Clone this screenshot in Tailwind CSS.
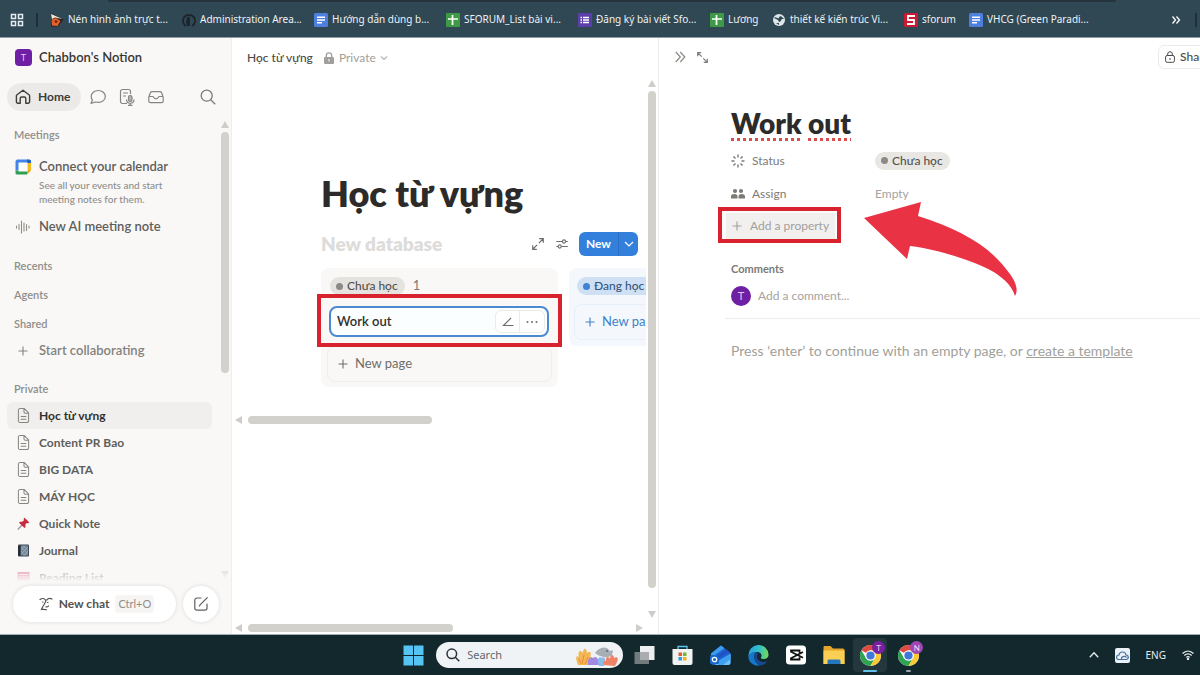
<!DOCTYPE html>
<html lang="vi">
<head>
    <meta charset="UTF-8">
    <meta name="viewport" content="width=device-width, initial-scale=1.0">
    <title>Học từ vựng</title>
    <script src="https://cdn.jsdelivr.net/npm/@tailwindcss/browser@4"></script>
</head>
<body class="font-['Lato','Noto_Sans',sans-serif] text-[13px] text-[#32302c]">
    <!-- Shared icons -->
    <svg class="hidden">
        <symbol id="page" viewBox="0 0 14 18">
            <path d="M3.2 1.5h4.6l4.7 4.7v8.1a2.2 2.2 0 0 1-2.2 2.2H3.2a1.700 1.700 0 0 1-1.700-1.700V3.200a1.700 1.700 0 0 1 1.700-1.700zM7.500 1.700v3.300a1.500 1.500 0 0 0 1.500 1.500h3.300M4 10h6M4 13h6" fill="none" stroke="currentColor" stroke-width="1.100"/>
        </symbol>
        <symbol id="plus" viewBox="0 0 10 10">
            <path d="M5 .5v9M.5 5h9" fill="none" stroke="currentColor" stroke-width="1.100"/>
        </symbol>
        <symbol id="docs" viewBox="0 0 14 14">
            <rect width="14" height="14" rx="1.500" fill="#4d80dd"/>
            <path d="M3 4.300h8M3 7h8M3 9.700h5" stroke="#fff" stroke-width="1.400"/>
        </symbol>
        <symbol id="sheets" viewBox="0 0 14 14">
            <rect width="14" height="14" rx="1" fill="#3f9a45"/>
            <path d="M6.500 2v10M2 6h10" stroke="#fff" stroke-width="1.700"/>
        </symbol>
        <symbol id="chrome" viewBox="0 0 24 24">
            <circle cx="12" cy="12" r="11" fill="#fff"/>
            <path d="M12 12 2.500 6.500A11 11 0 0 1 21.500 6.500H12z" fill="#dd4b3e"/>
            <path d="M2.500 6.500A11 11 0 0 0 12 23l4.800-8.300L12 12 7.200 14.700z" fill="#2fa352"/>
            <path d="M21.500 6.500H12l4.800 8.200L12 23A11 11 0 0 0 21.500 6.500z" fill="#fbc934"/>
            <circle cx="12" cy="12" r="5.500" fill="#fff"/>
            <circle cx="12" cy="12" r="4.300" fill="#3f78d8"/>
        </symbol>
    </svg>

    <div class="flex h-screen flex-col overflow-hidden bg-white">
        <!-- Bookmarks bar -->
        <nav class="relative flex h-[38px] shrink-0 items-center overflow-hidden border-b border-[#8b9ca5] bg-[#304754] pt-[2px] pl-2.5 font-['Noto_Sans',sans-serif] text-[10px] text-[#eef3f5]">
            <div class="absolute top-0 left-[108px] h-[2px] w-[84%] max-w-[1010px] rounded-b-lg bg-[#25333c]"></div>
            <button aria-label="Apps" class="mr-3">
                <svg class="size-3.5" viewBox="0 0 14 14" fill="none" stroke="#e4ecef" stroke-width="1.500"><path d="M1.500 1.500h4v4h-4zM8.500 1.500h4v4h-4zM1.500 8.500h4v4h-4zM8.500 8.500h4v4h-4z"/></svg>
            </button>
            <div class="mr-3 h-3.5 w-[2px] bg-[#1c2f3b]"></div>
            <a href="#" class="flex w-[132px] shrink-0 items-center gap-1 whitespace-nowrap">
                <svg class="size-3.5 shrink-0" viewBox="0 0 14 14"><path d="M1 .5 13.500 6.500 8 13.500 1 13.500 2.500 8z" fill="#2b211f"/><path d="M1 1 12.500 6 5 4.500 2 6z" fill="#f4ead9"/><path d="M2 6.500 6 5l4.500 3-3 5-5.500-.5z" fill="#e5632b"/><circle cx="6" cy="8.500" r="1.500" fill="#7e2616"/></svg>
                Nén hình ảnh trực t...
            </a>
            <a href="#" class="flex w-[132px] shrink-0 items-center gap-1 whitespace-nowrap">
                <svg class="size-3.5 shrink-0" viewBox="0 0 14 14"><path d="M4 13A6 6 0 1 1 10 13M7 4c-3 2-2 6-1 9M7 4v9" fill="none" stroke="#1c242b" stroke-width="1.800"/></svg>
                Administration Area...
            </a>
            <a href="#" class="flex w-[132px] shrink-0 items-center gap-1 whitespace-nowrap"><svg class="size-3.5 shrink-0"><use href="#docs"/></svg>Hướng dẫn dùng b...</a>
            <a href="#" class="flex w-[132px] shrink-0 items-center gap-1 whitespace-nowrap"><svg class="size-3.5 shrink-0"><use href="#sheets"/></svg>SFORUM_List bài vi...</a>
            <a href="#" class="flex w-[132px] shrink-0 items-center gap-1 whitespace-nowrap">
                <svg class="size-3.5 shrink-0" viewBox="0 0 14 14"><rect width="14" height="14" rx="1" fill="#5b3fa8"/><path d="M5 4.500h6M5 7h6M5 9.500h6M2.500 4.500H4M2.500 7H4M2.500 9.500H4" stroke="#fff" stroke-width="1.300"/></svg>
                Đăng ký bài viết Sfo...
            </a>
            <a href="#" class="flex w-[62px] shrink-0 items-center gap-1 whitespace-nowrap"><svg class="size-3.5 shrink-0"><use href="#sheets"/></svg>Lương</a>
            <a href="#" class="flex w-[132px] shrink-0 items-center gap-1 whitespace-nowrap">
                <svg class="size-3.5 shrink-0" viewBox="0 0 14 14"><circle cx="7" cy="7" r="6" fill="#dfe6ea"/><path d="M2 5c2-2 3 1 5 0 0-2 2-2 3-1l2 2c-2 0-3 0-3 2l-2 1-1-2zM4 10l3 0v2z" fill="#304754"/></svg>
                thiết kế kiến trúc Vi...
            </a>
            <a href="#" class="flex w-[65px] shrink-0 items-center gap-1 whitespace-nowrap">
                <svg class="size-3.5 shrink-0" viewBox="0 0 14 14"><rect width="14" height="14" rx="1.500" fill="#c91a33"/><path d="M11 3H4v4h6v4H3" fill="none" stroke="#fff" stroke-width="1.800"/></svg>
                sforum
            </a>
            <a href="#" class="flex w-[132px] shrink-0 items-center gap-1 whitespace-nowrap"><svg class="size-3.5 shrink-0"><use href="#docs"/></svg>VHCG (Green Paradi...</a>
            <button aria-label="More bookmarks" class="mr-3.5 ml-auto">
                <svg class="size-2.5" viewBox="0 0 10 10" fill="none" stroke="#fff" stroke-width="1.300"><path d="m1.500 1.500 3 3.500-3 3.500M5.500 1.500l3 3.500-3 3.500"/></svg>
            </button>
            <div class="mr-[3px] h-3.5 w-[2px] bg-[#1c2f3b]"></div>
        </nav>

        <main class="grid min-h-0 flex-1 grid-cols-[232px_426fr_542fr]">
            <!-- Sidebar -->
            <aside class="relative flex min-h-0 flex-col border-r border-[#efeeec] bg-[#f9f8f7] text-[#5f5e5b]">
                <div class="flex h-[39px] shrink-0 items-center gap-[7px] pl-[15px]">
                    <span class="flex size-[17px] items-center justify-center rounded bg-[#6e1fa3] text-[9px] text-[#e3c9f2]">T</span>
                    <span class="font-semibold text-[#383733]">Chabbon's Notion</span>
                </div>
                <div class="flex h-[39px] shrink-0 items-center pl-[7px]">
                    <button class="mr-[9px] flex h-7 w-[74px] items-center gap-[7px] rounded-full bg-[#ebeae8] pl-2 text-[12px] font-bold text-[#3d3c38]">
                        <svg class="size-4" viewBox="0 0 16 16" fill="none" stroke="currentColor" stroke-width="1.400" stroke-linejoin="round"><path d="M8 1.300 2 5.800a1.400 1.400 0 0 0-.6 1.200v5.700A1.500 1.500 0 0 0 2.900 14.200h2.300V9.500a1.500 1.500 0 0 1 1.500-1.500h2.600a1.500 1.500 0 0 1 1.500 1.500v4.700h2.300a1.500 1.500 0 0 0 1.500-1.500V7a1.400 1.400 0 0 0-.6-1.200z"/></svg>
                        Home
                    </button>
                    <button aria-label="Chat" class="mr-[13px]">
                        <svg class="size-4" viewBox="0 0 16 16" fill="none" stroke="#868582" stroke-width="1.200" stroke-linejoin="round"><path d="M8.300 1.500c4 0 7 2.600 7 5.900s-3 6-7 6c-1 0-1.900-.2-2.700-.4L1 14.300l1.500-3.200C1.700 10 1.200 8.800 1.200 7.400c0-3.300 3-5.900 7.100-5.900z"/></svg>
                    </button>
                    <button aria-label="Meeting notes" class="mr-[13px]">
                        <svg class="h-[18px] w-4" viewBox="0 0 16 18" fill="none" stroke="#868582" stroke-width="1.200"><path d="M8 15.500H3.500a2 2 0 0 1-2-2v-10a2 2 0 0 1 2-2h6a2 2 0 0 1 2 2V6M4 5h5M4 8h3"/><rect x="9.500" y="7.500" width="3.500" height="6" rx="1.700" fill="#b5b4b1"/><path d="M7.500 11.500c0 5 7.500 5 7.500 0M11.200 15.500v2M9 17.300h4.500"/></svg>
                    </button>
                    <button aria-label="Inbox">
                        <svg class="size-4" viewBox="0 0 16 16" fill="none" stroke="#868582" stroke-width="1.200"><path d="M.8 8 2.500 3.500a1.500 1.500 0 0 1 1.400-.9h8.200a1.500 1.500 0 0 1 1.400.9L15.200 8v4a1.700 1.700 0 0 1-1.700 1.700h-11A1.700 1.700 0 0 1 .8 12zM1 7.500h4c.5 0 .5 2.300 3 2.300s2.500-2.300 3-2.300h4"/></svg>
                    </button>
                    <button aria-label="Search" class="mr-[15px] ml-auto">
                        <svg class="size-4" viewBox="0 0 16 16" fill="none" stroke="#7b7a77" stroke-width="1.300"><circle cx="6.700" cy="6.700" r="5.500"/><path d="m10.700 10.700 4.500 4.500"/></svg>
                    </button>
                </div>

                <div class="min-h-0 flex-1 overflow-hidden pt-1 font-semibold">
                    <h2 class="h-[29px] pl-3.5 text-[11px] leading-[29px] text-[#8f8e8a]">Meetings</h2>
                    <div class="mt-1.5 flex h-6 items-center gap-2 pl-[15px]">
                        <svg class="size-4" viewBox="0 0 16 16"><path d="M2 .5h11v4H5v7H.5V2z" fill="#4284ea"/><path d="M12 .5h2.500A1.500 1.500 0 0 1 16 2v2h-4z" fill="#2260c4"/><path d="M12 4h4v8h-4z" fill="#f6bb24"/><path d="M.5 11.500H12v4H2A1.500 1.500 0 0 1 .5 14z" fill="#2f9e50"/><path d="M12 11.500h4l-4 4z" fill="#e5a11d"/><path d="M3.500 3.500h9v9h-9z" fill="#fff"/></svg>
                        Connect your calendar
                    </div>
                    <p class="-mt-px w-[190px] pl-[39px] text-[10px] leading-[14px] font-medium text-[#8f8e8a]">See all your events and start meeting notes for them.</p>
                    <div class="mt-[9px] flex h-6 items-center gap-2 pl-[15px]">
                        <svg class="size-4" viewBox="0 0 16 16" stroke="#8f8e8a" stroke-width="1.100" stroke-linecap="round"><path d="M1.500 7v2M4 5.500v5M6.500 2v12M9 4v8M11.500 5.500v6M14 7v2"/></svg>
                        New AI meeting note
                    </div>
                    <div class="mt-3 text-[11px] text-[#8f8e8a]">
                        <h2 class="h-[29px] pl-3.5 leading-[29px]">Recents</h2>
                        <h2 class="h-[29px] pl-3.5 leading-[29px]">Agents</h2>
                        <h2 class="h-[29px] pl-3.5 leading-[29px]">Shared</h2>
                    </div>
                    <a href="#" class="flex h-[26px] items-center gap-[11px] pl-[18px] text-[#83827e]"><svg class="size-2.5"><use href="#plus"/></svg>Start collaborating</a>
                    <h2 class="mt-3 h-[26px] pl-3.5 text-[11px] leading-[26px] text-[#8f8e8a]">Private</h2>
                    <div class="mr-[19px] ml-[7px] text-[12px] font-bold">
                        <a href="#" class="flex h-[27px] items-center gap-[9px] rounded-md bg-[#f0efed] pl-2.5 text-[#32302c]"><svg class="h-[17px] w-[13px] text-[#868582]"><use href="#page"/></svg>Học từ vựng</a>
                        <a href="#" class="flex h-[27px] items-center gap-[9px] pl-2.5"><svg class="h-[17px] w-[13px] text-[#868582]"><use href="#page"/></svg>Content PR Bao</a>
                        <a href="#" class="flex h-[27px] items-center gap-[9px] pl-2.5"><svg class="h-[17px] w-[13px] text-[#868582]"><use href="#page"/></svg>BIG DATA</a>
                        <a href="#" class="flex h-[27px] items-center gap-[9px] pl-2.5"><svg class="h-[17px] w-[13px] text-[#868582]"><use href="#page"/></svg>MÁY HỌC</a>
                        <a href="#" class="flex h-[27px] items-center gap-[9px] pl-2.5">
                            <svg class="size-[13px]" viewBox="0 0 13 13"><path d="M5 8 .8 12.500" stroke="#8c98a4" stroke-width="1.200"/><path d="M7.500.8 12.300 5.300 11 6.200 9.700 5.900 8.300 7.800 8.500 10.200 7.500 11 2 5.700 3 4.700l2.200.1L7 3.300 6.600 1.800z" fill="#c92a3c"/></svg>
                            Quick Note
                        </a>
                        <a href="#" class="flex h-[27px] items-center gap-[9px] pl-2.5">
                            <svg class="size-[13px]" viewBox="0 0 13 13"><rect x="1" y=".5" width="11" height="12" rx="1" fill="#3a4754"/><path d="M4 1.500h7v10H4z" fill="#75889a"/><path d="m4 3 7 7M4 7l4 4.500M6 1.500l5 5M11 3l-7 7M8 1.500 4 6M11 7l-4 4.500" stroke="#b3c0cb" stroke-width=".5"/><path d="M1 2h2v9.500H1z" fill="#242d36"/></svg>
                            Journal
                        </a>
                        <a href="#" class="flex h-[27px] items-center gap-[9px] pl-2.5">
                            <svg class="size-[13px]" viewBox="0 0 13 13"><rect x=".5" y="1" width="12" height="11" rx="1" fill="#d9557a"/><path d="M2 3.500h9M2 6h9" stroke="#f5ccd7"/></svg>
                            Reading List
                        </a>
                    </div>
                </div>

                <!-- Sidebar scrollbar -->
                <div class="absolute top-[83px] right-[2px] bottom-[56px] flex w-2 flex-col items-center gap-1">
                    <svg class="h-[7px] w-2" viewBox="0 0 8 7"><path d="M4 0 8 7H0z" fill="#cfcdc9"/></svg>
                    <div class="h-[241px] w-2 rounded-full bg-[#d3d1cc]"></div>
                    <svg class="mt-auto h-[7px] w-2" viewBox="0 0 8 7"><path d="M4 7 8 0H0z" fill="#cfcdc9"/></svg>
                </div>

                <!-- New chat footer -->
                <div class="absolute inset-x-0 bottom-0 flex h-[66px] items-end gap-[7px] bg-linear-to-b from-[#f9f8f7]/40 via-[#f9f8f7] via-20% to-[#f9f8f7] pb-3 pl-[13px]">
                    <button class="flex h-9 w-[163px] items-center justify-center rounded-full bg-white pl-1 text-[12px] font-bold text-[#53524e] shadow-[0_0_4px_rgba(0,0,0,0.12)]">
                        <svg class="mr-1.5 size-[14px]" viewBox="0 0 14 14" fill="none" stroke="currentColor" stroke-width="1.200" stroke-linecap="round"><path d="M1 2.500C3 1 5.500 1.200 6.300 3M8 2.800c1.200-1.800 3.200-1.800 5-.8M7 3c0 3-3 5-4.500 9.500 1.500-.3 3-.3 5 .3M8.500 5.500h.5M3.500 5h.5M9.500 9c-.5.700-1.500 1-2.500.9"/></svg>
                        New chat
                        <kbd class="ml-1.5 rounded bg-[#f6f5f4] px-[3px] py-px font-['Lato',sans-serif] text-[11px] font-normal text-[#8f8e8a]">Ctrl+O</kbd>
                    </button>
                    <button aria-label="New page" class="flex size-9 items-center justify-center rounded-full bg-white shadow-[0_0_4px_rgba(0,0,0,0.12)]">
                        <svg class="size-4" viewBox="0 0 16 16" fill="none" stroke="#5f5e5b" stroke-width="1.200" stroke-linecap="round"><path d="M8 2H4a2.200 2.200 0 0 0-2.200 2.200V12A2.200 2.200 0 0 0 4 14.200h7.800A2.200 2.200 0 0 0 14 12V8M14.300 1.700 7.300 8.700l-1 1.300"/></svg>
                    </button>
                </div>
            </aside>

            <!-- Page -->
            <section class="relative flex min-w-0 flex-col overflow-hidden">
                <div class="flex h-[39px] shrink-0 items-center pl-[15px] text-[12px]">
                    <span class="font-medium text-[#4b4a46]">Học từ vựng</span>
                    <svg class="mr-[5px] ml-[11px] h-3 w-2.5" viewBox="0 0 10 12"><rect y="5" width="10" height="7" rx="1.300" fill="#a19f9b"/><path d="M2.300 5.500V3.500a2.700 2.700 0 0 1 5.400 0v2" fill="none" stroke="#a19f9b" stroke-width="1.300"/><path d="M5 7v2.500" stroke="#fff"/></svg>
                    <button class="flex items-center gap-1 text-[#a19f9b]">Private
                        <svg class="size-2" viewBox="0 0 8 8" fill="none" stroke="#b4b2ae" stroke-width="1.100"><path d="m1 2.500 3 3 3-3"/></svg>
                    </button>
                </div>
                <div class="mr-3 pl-[89px]">
                    <h1 class="mt-[92px] text-[36px] leading-[48px] font-extrabold text-[#2c2b29]">Học từ vựng</h1>
                    <div class="mt-[15px] mr-2 flex h-6 items-center">
                        <h2 class="mr-auto text-[19px] font-extrabold text-[#dddcda]">New database</h2>
                        <button aria-label="Open as full page" class="mr-3"><svg class="size-3" viewBox="0 0 10 10" fill="none" stroke="#6f6e6a"><path d="M6 .6h3.400V4M9.400.6 5.700 4.300M.6 6v3.400H4M.6 9.400l3.700-3.700"/></svg></button>
                        <button aria-label="Settings" class="mr-[11px]"><svg class="size-3" viewBox="0 0 12 12" fill="none" stroke="#6f6e6a" stroke-width="1.100"><path d="M.3 3.500h6M10 3.500h1.800M.3 8.500H2M5.500 8.500h6.300"/><circle cx="8" cy="3.500" r="1.600"/><circle cx="3.700" cy="8.500" r="1.600"/></svg></button>
                        <button class="h-6 w-[39px] rounded-l-md bg-[#3380dc] text-[12px] font-bold text-white">New</button>
                        <button aria-label="New from template" class="flex h-6 w-5 items-center justify-center rounded-r-md border-l border-[#2b70c4] bg-[#3380dc]"><svg class="size-2.5" viewBox="0 0 10 10" fill="none" stroke="#fff" stroke-width="1.200"><path d="m1 3 4 4 4-4"/></svg></button>
                    </div>

                    <!-- Board -->
                    <div class="relative mt-3">
                        <div class="flex items-start gap-[11px] overflow-hidden">
                            <div class="h-[119px] w-[237px] shrink-0 rounded-lg bg-[#f9f8f7] px-1.5 pt-[9px]">
                                <div class="flex h-[18px] items-center pl-[3px]">
                                    <span class="mr-2 flex h-[18px] items-center gap-1 rounded-full bg-[#e4e3e0] pr-[7px] pl-1.5 text-[12px] font-medium text-[#53524e]"><span class="size-[7px] rounded-full bg-[#8b8a86]"></span>Chưa học</span>
                                    <span class="text-[#7d7a75]">1</span>
                                </div>
                                <div class="mt-[11px] mr-[3px] ml-[2px] flex h-[31px] items-center rounded-lg border-2 border-[#4b8ad0] bg-[#fbfeff] pr-[2px] pl-1.5">
                                    <input aria-label="Card title" value="Work out" class="w-0 min-w-0 flex-1 bg-transparent font-semibold text-[#32302c] outline-none">
                                    <div class="flex h-[23px] rounded-md border border-[#ecebe9] bg-white">
                                        <button aria-label="Edit" class="flex w-6 items-center justify-center border-r border-[#ecebe9]"><svg class="size-3" viewBox="0 0 12 12" fill="none" stroke="#6f6e6a" stroke-width="1.200"><path d="M11.500 9.500h-10L9 2"/></svg></button>
                                        <button aria-label="More" class="flex w-6 items-center justify-center"><svg class="size-3" viewBox="0 0 12 12" fill="#6f6e6a"><circle cx="1.500" cy="6" r="1"/><circle cx="6" cy="6" r="1"/><circle cx="10.500" cy="6" r="1"/></svg></button>
                                    </div>
                                </div>
                                <button class="mt-[9px] flex h-9 w-full items-center gap-[7px] rounded-lg border border-[#efeeec] pl-2.5 text-[#6f6e6a]"><svg class="size-2.5"><use href="#plus"/></svg>New page</button>
                            </div>
                            <div class="h-[78px] w-[237px] shrink-0 rounded-lg bg-[#f4f8fd] pt-[9px] pr-1.5 pl-[5px]">
                                <span class="ml-[3px] flex h-[18px] w-[88px] items-center gap-1 rounded-full bg-[#cfe0f5] pl-1.5 text-[12px] font-medium text-[#35577c]"><span class="size-[7px] rounded-full bg-[#3f82d6]"></span>Đang học</span>
                                <button class="mt-[9px] flex h-9 w-full items-center gap-[7px] rounded-lg border border-[#e6effa] pl-2.5 text-[#3d80c8]"><svg class="size-2.5"><use href="#plus"/></svg>New page</button>
                            </div>
                        </div>
                        <!-- Highlight -->
                        <div class="pointer-events-none absolute top-[26px] -left-1 h-[53px] w-[245px] border-4 border-[#d8232f]"></div>
                    </div>
                </div>
                <!-- Board scrollbar -->
                <div class="mt-[29px] flex h-2 items-center gap-1.5 pl-[3px]">
                    <svg class="h-2 w-[7px]" viewBox="0 0 7 8"><path d="M0 4 7 0v8z" fill="#cfcdc9"/></svg>
                    <div class="h-2 w-[184px] rounded-full bg-[#d3d1cc]"></div>
                </div>
                <!-- Page scrollbars -->
                <div class="mt-auto mr-[15px] mb-[2px] flex h-2 items-center gap-1.5 pl-[3px]">
                    <svg class="h-2 w-[7px]" viewBox="0 0 7 8"><path d="M0 4 7 0v8z" fill="#cfcdc9"/></svg>
                    <div class="mr-auto h-2 w-[205px] rounded-full bg-[#d3d1cc]"></div>
                    <svg class="h-2 w-[7px]" viewBox="0 0 7 8"><path d="M7 4 0 0v8z" fill="#cfcdc9"/></svg>
                </div>
                <div class="absolute top-[42px] right-[2px] bottom-[16px] flex w-2 flex-col items-center gap-1">
                    <svg class="h-[7px] w-2" viewBox="0 0 8 7"><path d="M4 0 8 7H0z" fill="#cfcdc9"/></svg>
                    <div class="w-2 flex-1 rounded-full bg-[#d3d1cc]"></div>
                    <svg class="mt-[19px] h-[7px] w-2" viewBox="0 0 8 7"><path d="M4 7 8 0H0z" fill="#cfcdc9"/></svg>
                </div>
            </section>

            <!-- Side peek -->
            <section class="relative min-w-0 overflow-hidden border-l border-[#eeedeb]">
                <div class="flex h-[38px] items-center pl-4">
                    <button aria-label="Close side peek" class="mr-[11px]"><svg class="h-3 w-[11px]" viewBox="0 0 11 12" fill="none" stroke="#8b8a86" stroke-width="1.200"><path d="m.8 1 4.500 5-4.500 5M5.300 1l4.500 5-4.500 5"/></svg></button>
                    <button aria-label="Open full page"><svg class="size-[11px]" viewBox="0 0 11 11" fill="none" stroke="#7d7c78" stroke-width="1.200"><path d="M.7 4.200V.7h3.500M.7.7l4 4M10.300 6.800v3.500H6.800M10.300 10.300l-4-4"/></svg></button>
                    <button class="-mr-6 ml-auto flex h-6 w-[66px] shrink-0 items-center gap-[5px] rounded-md border border-[#ecebe9] pl-1.5 text-[12px] font-medium text-[#4b4a46]">
                        <svg class="h-3 w-2.5" viewBox="0 0 10 12" fill="none" stroke="#4b4a46"><rect x=".6" y="4.500" width="8.800" height="6.800" rx="1.500"/><path d="M2.700 4.500V3a2.300 2.300 0 0 1 4.600 0v1.500M5 7v2"/></svg>
                        Share
                    </button>
                </div>
                <div class="pl-[72px] text-[12px]">
                    <h1 class="mt-[29px] text-[28px] leading-[36px] font-extrabold text-[#2c2b29]"><span class="underline decoration-[#d8504e] decoration-dotted decoration-3 underline-offset-4">Work</span> <span class="underline decoration-[#d8504e] decoration-dotted decoration-3 underline-offset-4">out</span></h1>
                    <dl class="mt-[3px] grid grid-cols-[144px_1fr] text-[#7d7a75]">
                        <dt class="flex h-[33px] items-center gap-[7px]"><svg class="size-3.5" viewBox="0 0 14 14" stroke="#7d7a75" stroke-width="1.400"><path d="M7 .5v3M7 10.500v3M.5 7h3M10.500 7h3M2.400 2.400l2.100 2.100M9.500 9.500l2.100 2.100M2.400 11.600l2.100-2.100M9.500 4.500l2.100-2.100"/></svg>Status</dt>
                        <dd class="flex h-[33px] items-center"><span class="flex h-[18px] items-center gap-1 rounded-full bg-[#e8e7e4] pr-[7px] pl-1.5 font-medium text-[#53524e]"><span class="size-[7px] rounded-full bg-[#8b8a86]"></span>Chưa học</span></dd>
                        <dt class="flex h-[33px] items-center gap-[7px]"><svg class="size-3.5" viewBox="0 0 14 14" fill="#7d7a75"><circle cx="4" cy="4" r="2.100"/><circle cx="10" cy="4" r="2.100"/><path d="M0 11.500V9.500C0 6.300 6.500 6.300 6.500 9.500v2zM7.500 11.500v-2C7.500 6.300 14 6.300 14 9.500v2z"/></svg>Assign</dt>
                        <dd class="flex h-[33px] items-center text-[#a5a39f]">Empty</dd>
                    </dl>
                    <div class="-mt-[3px] -ml-[13px] w-fit border-4 border-[#d8232f] bg-[#fbf9f9] pt-[2px] pr-[2px] pl-1">
                        <button class="flex h-[26px] items-center gap-2 bg-[#f2f0ef] pr-1.5 pl-1.5 text-[#a19f9b]"><svg class="size-2.5"><use href="#plus"/></svg>Add a property</button>
                    </div>
                    <h3 class="mt-3 text-[11px] leading-[28px] font-bold text-[#7d7a75]">Comments</h3>
                    <label class="flex h-[26px] items-center gap-[7px]">
                        <span class="flex size-5 items-center justify-center rounded-full bg-[#6e1fa3] text-[11px] text-[#e3c9f2]">T</span>
                        <input aria-label="Add a comment" placeholder="Add a comment..." class="flex-1 bg-transparent outline-none placeholder:text-[#a5a39f]">
                    </label>
                    <hr class="mt-[9px] -ml-1.5 border-[#edecea]">
                    <p class="mt-[22px] text-[14px] leading-5 text-[#a19f9b]">Press ‘enter’ to continue with an empty page, or <a href="#" class="underline">create a template</a></p>
                </div>
                <!-- Pointer arrow -->
                <svg class="absolute top-[163px] left-[205px] h-[95px] w-[154px]" viewBox="0 0 154 95"><path d="M0 17 57 1 54 15C92 27 120 42 138 63 149 76 156 86 151 95 148 84 136 71 108 61 92 55 70 48 46 45L43 58z" fill="#e93345"/></svg>
            </section>
        </main>

        <!-- Taskbar -->
        <footer class="flex h-[41px] shrink-0 items-center overflow-hidden border-t border-[#9db0b6] bg-[#13282c]">
            <div class="flex-[3]"></div>
            <button aria-label="Start" class="mr-3"><svg class="size-[21px]" viewBox="0 0 21 21" fill="#55c4f3"><path d="M.5.5H10V10H.5zM11 .5h9.500V10H11zM.5 11H10v9.500H.5zM11 11h9.500v9.500H11z"/></svg></button>
            <label class="mr-[11px] flex h-[26px] w-[187px] shrink-0 items-center rounded-full bg-[#f0f3f5] pl-2.5 font-['Noto_Sans',sans-serif] text-[11px]">
                <svg class="mr-[7px] size-3.5 shrink-0" viewBox="0 0 14 14" fill="none" stroke="#28323a" stroke-width="1.500"><circle cx="5.800" cy="5.800" r="4.800"/><path d="m9.300 9.300 4 4"/></svg>
                <input aria-label="Search" placeholder="Search" class="w-0 min-w-0 flex-1 bg-transparent outline-none placeholder:text-[#5f666b]">
                <svg class="mr-1 h-[21px] w-[43px] shrink-0" viewBox="0 0 43 21"><path d="M2 20C0 15-1 9 3 12c-2-6 2-8 4-4 0-6 4-5 4 0 3-3 5 0 3 4 3-1 4 3 1 8z" fill="#f4b653"/><path d="m6 19 2-9M9 19l3-7M5 18l-2-4" stroke="#e88b36" fill="none"/><path d="M12 20c-1-6 2-9 5-7 3-3 6 1 6 7z" fill="#a08be0"/><path d="M19 8c4-6 11-8 15-2l3-1-1 5c-5 4-12 2-17-2z" fill="#a8aeb6"/><path d="M22 17c-1-4 2-6 4-4 1-2 4 0 3 3l-1 5h-5z" fill="#8abceb"/><path d="M28 20c-2-3 0-5 2-4-1-5 3-5 4-2 0-5 4-5 4-1 3-2 5 0 3 4l-2 4z" fill="#ef8368"/><circle cx="31" cy="6" r=".8" fill="#333"/></svg>
            </label>
            <button aria-label="Task view" class="mr-[17px] shrink-0"><svg class="size-[21px]" viewBox="0 0 21 21"><path d="M6 1h14.500v14H6z" fill="#eceeef"/><path d="M.5 7H15v12H.5z" fill="#727b7e"/><path d="M6 7h9v8H6z" fill="#a9adaf"/></svg></button>
            <button aria-label="Store" class="mr-[17px] shrink-0"><svg class="size-[21px]" viewBox="0 0 21 21"><path d="M6 5V1.500h9V5" fill="none" stroke="#5ac3ee" stroke-width="1.300"/><path d="M.5 4h20v14a2 2 0 0 1-2 2h-16a2 2 0 0 1-2-2z" fill="#f1f3f3"/><path d="M6.500 7.500H10V11H6.500z" fill="#e25b33"/><path d="M11 7.500h3.500V11H11z" fill="#7bb42e"/><path d="M6.500 12H10v3.500H6.500z" fill="#2c9bdf"/><path d="M11 12h3.500v3.500H11z" fill="#f3b31c"/></svg></button>
            <button aria-label="Outlook" class="mr-[17px] shrink-0"><svg class="size-[21px]" viewBox="0 0 21 21"><path d="M1 8.500 11 .5l9.500 7.500v9.500A2.500 2.500 0 0 1 18 20H3.500A2.500 2.500 0 0 1 1 17.500z" fill="#1d63cf"/><path d="M1 8.500 11 .5l3.500 2.800L3.500 11H1z" fill="#3c9cf0"/><path d="m7 11 9.500-6.500 2.500 2L9 13z" fill="#2350c4"/><path d="M20.500 9v8.500A2.500 2.500 0 0 1 18 20H5l5-5z" fill="#6cc5f8"/><path d="M10 15 20.500 9v5L13 20H8z" fill="#3f9ff0"/><rect y="10" width="9" height="9" rx="1.500" fill="#1668cd"/><circle cx="4.500" cy="14.500" r="2.200" fill="none" stroke="#fff" stroke-width="1.300"/></svg></button>
            <button aria-label="Edge" class="mr-[17px] shrink-0">
                <svg class="size-[21px]" viewBox="0 0 21 21">
                    <defs><linearGradient id="edge" x1="0" x2="1" y1=".3" y2=".4"><stop stop-color="#2a9fe0"/><stop offset=".55" stop-color="#35c1c4"/><stop offset="1" stop-color="#73d957"/></linearGradient></defs>
                    <path d="M.5 10.500A10 10 0 0 1 20.500 9.500c.2 3.500-3 5-6 4.500-1.500-.3-2-1-1.300-2 1.200-2.500-.7-5-4.200-5C4.500 7 1.500 8.500.5 12z" fill="url(#edge)"/>
                    <path d="M.5 11.500C1.500 8 5 6.500 8.500 7 5 9 5 17 12 20.300 5.500 21.500.2 17 .5 11.500z" fill="#1578cc"/>
                    <path d="M8.500 7.500C4.500 10.500 6.500 18.500 12 20.300c3 .2 5.800-1.500 7.300-4-4.500 2-9.500.2-10.300-4.300-.2-1.200.3-2.500 1.300-3.500z" fill="#174a94"/>
                </svg>
            </button>
            <button aria-label="CapCut" class="mr-[17px] shrink-0"><svg class="size-[20px]" viewBox="0 0 20 20"><rect width="20" height="19" y=".5" rx="3.500" fill="#fff"/><path d="M17 7 5 13.200v1.300h8.500v-2.200M17 12.800 5 6.800V5.500h8.500v2.200" fill="none" stroke="#111" stroke-width="1.800"/></svg></button>
            <button aria-label="File Explorer" class="mr-2 shrink-0"><svg class="size-[22px]" viewBox="0 0 22 22"><path d="M.5 3A1.200 1.200 0 0 1 1.700 2H7.500L10 4.500h10a1.500 1.500 0 0 1 1.500 1.500v14H.5z" fill="#e5a52b"/><path d="M.5 6.500h21V20H.5z" fill="#fbcf53"/><path d="M4.500 20v-3A1.500 1.500 0 0 1 6 15.500h10a1.500 1.500 0 0 1 1.500 1.500v3z" fill="#2477bd"/></svg></button>
            <button aria-label="Chrome, profile T" class="relative mr-1 flex h-[34px] w-[34px] shrink-0 items-center justify-center rounded bg-[#23373c]">
                <svg class="size-[23px]"><use href="#chrome"/></svg>
                <span class="absolute top-[3px] right-[2px] flex size-[13px] items-center justify-center rounded-full bg-[#7b1fa2] text-[8px] text-[#e9d2f4]">T</span>
                <span class="absolute bottom-0 h-[2px] w-3.5 rounded-full bg-[#62bfe9]"></span>
            </button>
            <button aria-label="Chrome, profile N" class="relative flex h-[34px] w-[34px] shrink-0 items-center justify-center">
                <svg class="size-[23px]"><use href="#chrome"/></svg>
                <span class="absolute top-[3px] right-[2px] flex size-[13px] items-center justify-center rounded-full bg-[#a045b5] text-[8px] text-[#f1def6]">N</span>
                <span class="absolute bottom-0 h-[2px] w-[5px] rounded-full bg-[#9aa7ab]"></span>
            </button>
            <div class="flex flex-[2] items-center justify-end gap-4 pr-1.5 font-['Noto_Sans',sans-serif] text-[10px] text-[#e8eef0]">
                <svg class="size-2.5" viewBox="0 0 10 10" fill="none" stroke="#e8eef0" stroke-width="1.300"><path d="m.8 7.300 4.200-4.500 4.200 4.500"/></svg>
                <svg class="size-[15px]" viewBox="0 0 15 15"><rect width="15" height="15" rx="2" fill="#eaf1f8"/><path d="M4 11.500c-3.500 0-3-4.500 0-4.500.5-4 6.500-4 7 0 3 .2 3 4.500 0 4.500zM6.500 11.500c-.5-3 3-4 5-2" fill="none" stroke="#48719e" stroke-width="1.200"/></svg>
                <span>ENG</span>
                <svg class="h-2.5 w-3" viewBox="0 0 12 10" fill="none" stroke="#e8eef0" stroke-width="1.200"><path d="M.5 3.500c3.300-3.300 7.700-3.300 11 0M2.300 5.500c2.200-2.200 5.200-2.200 7.400 0M4.200 7.400c1.200-1.100 2.400-1.100 3.600 0"/><circle cx="6" cy="9" r=".6" fill="#e8eef0"/></svg>
            </div>
        </footer>
    </div>
</body>
</html>
